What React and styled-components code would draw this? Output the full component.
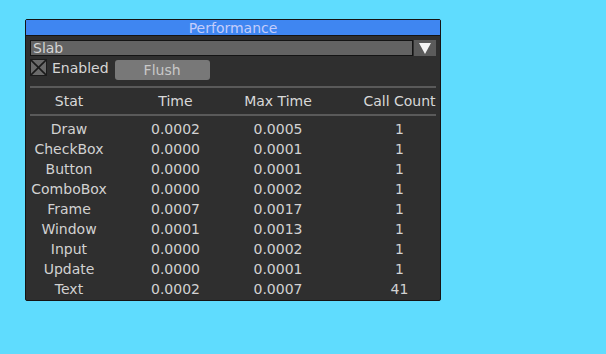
import React from "react";
import styled, { createGlobalStyle } from "styled-components";

const Global = createGlobalStyle`
  html, body { margin: 0; padding: 0; background: #5fdcfe; }
  body { font-family: "DejaVu Sans", "Liberation Sans", sans-serif; font-size: 14px; }
`;

const Page = styled.div`
  width: 606px;
  height: 354px;
  padding: 19px 0 0 25px;
  box-sizing: border-box;
`;

const Window = styled.div`
  width: 416px;
  height: 282px;
  box-sizing: border-box;
  border: 1px solid #141414;
  border-radius: 2px;
  background: #2f2f2f;
  display: flex;
  flex-direction: column;
`;

const TitleBar = styled.div`
  height: 15px;
  background: #3f86f1;
  border-bottom: 1px solid #141414;
  color: #c4cdfb;
  text-align: center;
  line-height: 17px;
  font-size: 14px;
`;

const Body = styled.div`
  padding: 4px 4px 0 4px;
  display: flex;
  flex-direction: column;
  color: #d2d2d2;
`;

const ComboRow = styled.div`
  display: flex;
  height: 16px;
  gap: 1px;
`;

const ComboField = styled.div`
  flex: 1;
  box-sizing: border-box;
  background: #636363;
  border: 1px solid #141414;
  color: #d4d4d4;
  line-height: 14px;
  padding-left: 2px;
`;

const ComboButton = styled.div`
  width: 22px;
  background: #5b5b5b;
  display: flex;
  align-items: center;
  justify-content: center;
`;

const ControlRow = styled.div`
  display: flex;
  align-items: flex-start;
  margin-top: 3px;
  height: 21px;
`;

const CheckBox = styled.div`
  width: 17px;
  height: 17px;
  box-sizing: border-box;
  background: #6a6a6a;
  border: 1px solid #1c1c1c;
  display: flex;
`;

const Label = styled.span`
  margin-left: 5px;
  line-height: 18px;
  color: #d6d6d6;
`;

const Button = styled.div`
  margin-left: 6px;
  margin-top: 1px;
  width: 95px;
  height: 20px;
  border-radius: 3px;
  background: #787878;
  color: #c8c8c8;
  text-align: center;
  line-height: 21px;
`;

const Separator = styled.div`
  height: 2px;
  background: #5a5a5a;
  margin-top: ${(p) => p.$top}px;
  width: 406px;
`;

const Grid = styled.div`
  display: grid;
  grid-template-columns: 78px 135px 70px 173px;
  justify-items: center;
`;

const HeaderGrid = styled(Grid)`
  height: 26px;
  line-height: 26px;
  color: #d8d8d8;
`;

const Rows = styled.div`
  padding-top: 3px;
`;

const Row = styled(Grid)`
  height: 20px;
  line-height: 20px;
`;

const Cell = styled.span`
  white-space: nowrap;
`;

const data = [
  ["Draw", "0.0002", "0.0005", "1"],
  ["CheckBox", "0.0000", "0.0001", "1"],
  ["Button", "0.0000", "0.0001", "1"],
  ["ComboBox", "0.0000", "0.0002", "1"],
  ["Frame", "0.0007", "0.0017", "1"],
  ["Window", "0.0001", "0.0013", "1"],
  ["Input", "0.0000", "0.0002", "1"],
  ["Update", "0.0000", "0.0001", "1"],
  ["Text", "0.0002", "0.0007", "41"],
];

export default function App() {
  return (
    <Page>
      <Global />
      <Window>
        <TitleBar>Performance</TitleBar>
        <Body>
          <ComboRow>
            <ComboField>Slab</ComboField>
            <ComboButton>
              <svg width="12" height="11" viewBox="0 0 12 11">
                <polygon points="0,0 12,0 6,11" fill="#f4f4f4" />
              </svg>
            </ComboButton>
          </ComboRow>
          <ControlRow>
            <CheckBox>
              <svg width="15" height="15" viewBox="0 0 15 15">
                <line x1="0" y1="0" x2="15" y2="15" stroke="#1a1a1a" strokeWidth="1.6" />
                <line x1="15" y1="0" x2="0" y2="15" stroke="#1a1a1a" strokeWidth="1.6" />
              </svg>
            </CheckBox>
            <Label>Enabled</Label>
            <Button>Flush</Button>
          </ControlRow>
          <Separator $top={6} />
          <HeaderGrid>
            <Cell>Stat</Cell>
            <Cell>Time</Cell>
            <Cell>Max Time</Cell>
            <Cell>Call Count</Cell>
          </HeaderGrid>
          <Separator $top={0} />
          <Rows>
            {data.map((r) => (
              <Row key={r[0]}>
                {r.map((c, i) => (
                  <Cell key={i}>{c}</Cell>
                ))}
              </Row>
            ))}
          </Rows>
        </Body>
      </Window>
    </Page>
  );
}
